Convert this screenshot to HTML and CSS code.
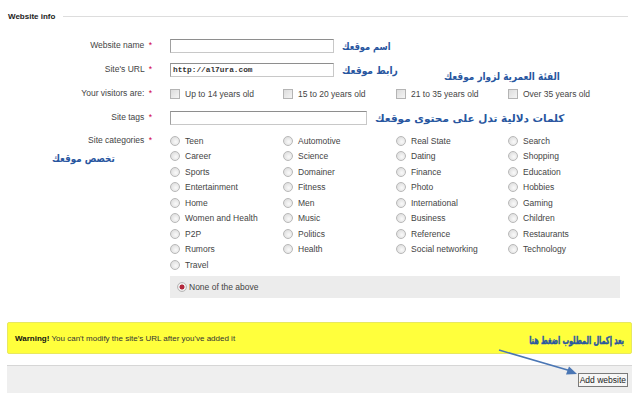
FILE: index.html
```html
<!DOCTYPE html>
<html lang="en">

<head>
    <meta charset="UTF-8">
    <link rel="stylesheet" href="styles.css">
</head>

<body>
    <div class="page">

        <div class="legend">
            <span class="legend-title">Website info</span>
            <span class="legend-line"></span>
        </div>

        <div class="form">
            <div class="row">
                <label class="label">Website name <b class="req">*</b></label>
                <div class="field">
                    <input class="input" type="text">
                    <span class="note note-name" dir="rtl">اسم موقعك</span>
                </div>
            </div>

            <div class="row">
                <label class="label">Site's URL <b class="req">*</b></label>
                <div class="field">
                    <input class="input url" type="text" value="http://al7ura.com">
                    <span class="note note-url" dir="rtl">رابط موقعك</span>
                </div>
            </div>

            <div class="row row-visitors">
                <label class="label">Your visitors are: <b class="req">*</b></label>
                <div class="field grid">
                    <span class="opt"><i class="check"></i>Up to 14 years old</span>
                    <span class="opt"><i class="check"></i>15 to 20 years old</span>
                    <span class="opt"><i class="check"></i>21 to 35 years old</span>
                    <span class="opt"><i class="check"></i>Over 35 years old</span>
                </div>
            </div>

            <div class="row row-tags">
                <label class="label">Site tags <b class="req">*</b></label>
                <div class="field">
                    <input class="input tags" type="text">
                    <span class="note" dir="rtl">كلمات دلالية تدل على محتوى موقعك</span>
                </div>
            </div>

            <div class="row row-cats">
                <label class="label">Site categories <b class="req">*</b></label>
                <div class="field cats">
                    <div class="grid">
                        <span class="opt"><i class="radio"></i>Teen</span>
                        <span class="opt"><i class="radio"></i>Automotive</span>
                        <span class="opt"><i class="radio"></i>Real State</span>
                        <span class="opt"><i class="radio"></i>Search</span>
                        <span class="opt"><i class="radio"></i>Career</span>
                        <span class="opt"><i class="radio"></i>Science</span>
                        <span class="opt"><i class="radio"></i>Dating</span>
                        <span class="opt"><i class="radio"></i>Shopping</span>
                        <span class="opt"><i class="radio"></i>Sports</span>
                        <span class="opt"><i class="radio"></i>Domainer</span>
                        <span class="opt"><i class="radio"></i>Finance</span>
                        <span class="opt"><i class="radio"></i>Education</span>
                        <span class="opt"><i class="radio"></i>Entertainment</span>
                        <span class="opt"><i class="radio"></i>Fitness</span>
                        <span class="opt"><i class="radio"></i>Photo</span>
                        <span class="opt"><i class="radio"></i>Hobbies</span>
                        <span class="opt"><i class="radio"></i>Home</span>
                        <span class="opt"><i class="radio"></i>Men</span>
                        <span class="opt"><i class="radio"></i>International</span>
                        <span class="opt"><i class="radio"></i>Gaming</span>
                        <span class="opt"><i class="radio"></i>Women and Health</span>
                        <span class="opt"><i class="radio"></i>Music</span>
                        <span class="opt"><i class="radio"></i>Business</span>
                        <span class="opt"><i class="radio"></i>Children</span>
                        <span class="opt"><i class="radio"></i>P2P</span>
                        <span class="opt"><i class="radio"></i>Politics</span>
                        <span class="opt"><i class="radio"></i>Reference</span>
                        <span class="opt"><i class="radio"></i>Restaurants</span>
                        <span class="opt"><i class="radio"></i>Rumors</span>
                        <span class="opt"><i class="radio"></i>Health</span>
                        <span class="opt"><i class="radio"></i>Social networking</span>
                        <span class="opt"><i class="radio"></i>Technology</span>
                        <span class="opt"><i class="radio"></i>Travel</span>
                    </div>
                    <div class="none-box">
                        <span class="opt"><i class="radio on"></i>None of the above</span>
                    </div>
                </div>
            </div>
        </div>

        <div class="warning">
            <span><b>Warning!</b> You can't modify the site's URL after you've added it</span>
            <span class="note note-done" dir="rtl">بعد إكمال المطلوب اضغط هنا</span>
        </div>

        <div class="actions">
            <button class="btn" type="button">Add website</button>
        </div>

        <!-- annotations pasted over the form -->
        <span class="note float note-age" dir="rtl">الفئة العمرية لزوار موقعك</span>
        <span class="note float note-cat" dir="rtl">تخصص موقعك</span>
        <svg class="arrow" width="90" height="40" viewBox="0 0 90 40">
            <line x1="2" y1="3" x2="74" y2="24" stroke="#4a76b4" stroke-width="1.6" />
            <polygon points="80,27 69,27.5 72,19.5" fill="#4a76b4" />
        </svg>

    </div>
</body>

</html>
```

FILE: styles.css
```css
body {
    margin: 0;
    background-color: #fff;
    font-family: "Liberation Sans", Arial, sans-serif;
    font-size: 8.5px;
    color: #444;
}

.page {
    position: relative;
    padding: 10px 8px 0 7px;
    height: 383px;
    overflow: hidden;
}

.legend {
    display: flex;
    align-items: center;
    height: 12px;
    margin-left: 1px;
}

.legend-title {
    font-size: 8px;
    font-weight: bold;
    color: #222;
    padding-right: 8px;
}

.legend-line {
    flex: 1;
    border-top: 1px solid #ddd;
    margin-right: 4px;
}

.form {
    margin-top: 12px;
}

.row {
    display: flex;
    align-items: center;
    height: 24px;
}

.row-visitors {
    height: 23px;
}

.row-tags {
    height: 25px;
}

.row-cats {
    height: auto;
    align-items: flex-start;
    margin-top: 3px;
}

.label {
    width: 145px;
    flex: none;
    text-align: right;
    line-height: 15.5px;
}

.req {
    color: #d0004a;
    font-weight: normal;
    margin-left: 2px;
}

.field {
    display: flex;
    align-items: center;
    margin-left: 18px;
}

.input {
    width: 164px;
    height: 14px;
    box-sizing: border-box;
    margin: 0;
    padding: 0 2px;
    border: 1px solid #c8c8c8;
    border-top-color: #8e8e8e;
    border-left-color: #a0a0a0;
    background: #fff;
}

.input.url {
    font-family: "Liberation Mono", "Courier New", monospace;
    font-weight: bold;
    font-size: 7.8px;
    color: #333;
}

.input.tags {
    width: 197px;
}

.note {
    font-family: "DejaVu Sans", sans-serif;
    font-weight: bold;
    font-size: 10.5px;
    color: #2856a0;
    margin-left: 8px;
    white-space: nowrap;
    transform-origin: left center;
}

.note-name {
    transform: scaleX(0.79);
}

.note-url {
    transform: scaleX(0.87);
}

.grid {
    display: grid;
    grid-template-columns: 113px 113px 112px 120px;
}

.opt {
    display: flex;
    align-items: center;
    height: 15.5px;
    white-space: nowrap;
}

.check {
    width: 8px;
    height: 8px;
    border: 1px solid #b4b4b4;
    background: linear-gradient(135deg, #dcdcdc, #f4f4f4);
    margin-right: 5px;
}

.radio {
    width: 8px;
    height: 8px;
    border-radius: 50%;
    border: 1px solid #b8b8b8;
    background: radial-gradient(circle at 60% 60%, #fafafa, #d6d6d6);
    margin-right: 5px;
}

.radio.on {
    background: radial-gradient(circle, #b3283c 0 2.2px, #f2f2f2 2.8px, #d8d8d8);
    margin-right: 2px;
}

.cats {
    display: block;
}

.none-box {
    display: flex;
    align-items: center;
    width: 450px;
    height: 22px;
    box-sizing: border-box;
    margin-top: 3.5px;
    padding-left: 7px;
    background-color: #ececec;
}

.warning {
    display: flex;
    align-items: center;
    justify-content: space-between;
    height: 32px;
    box-sizing: border-box;
    margin-top: 24px;
    padding: 0 7px 0 7px;
    background-color: #ffff3c;
    border: 1px solid #e8e860;
    border-radius: 2px;
    color: #333;
    font-size: 8px;
}

.warning b {
    color: #111;
}

.warning .note-done {
    padding-top: 4px;
    font-size: 10.5px;
    transform-origin: right center;
    transform: scaleX(0.62);
    -webkit-text-stroke: 0.5px #2856a0;
}

.actions {
    display: flex;
    justify-content: flex-end;
    height: 40px;
    margin-top: 11px;
    padding: 7px 4px 0 0;
    box-sizing: border-box;
    background-color: #efefef;
    border-top: 1px solid #d6d6d6;
}

.btn {
    height: 14px;
    padding: 0 1px;
    font-family: "Liberation Sans", Arial, sans-serif;
    font-size: 8.5px;
    color: #222;
    background: #f6f6f6;
    border: 1px solid #7a7a7a;
    border-radius: 0;
}

.float {
    position: absolute;
    margin: 0;
}

.note-age {
    left: 444px;
    top: 70px;
    transform: scaleX(0.85);
}

.note-cat {
    left: 52px;
    top: 152px;
    transform: scaleX(0.83);
}

.arrow {
    position: absolute;
    left: 497px;
    top: 347px;
}
```
